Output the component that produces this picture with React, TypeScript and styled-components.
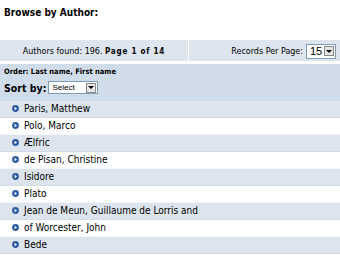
import React from "react";
import styled, { createGlobalStyle } from "styled-components";

const Global = createGlobalStyle`
  html, body { margin: 0; padding: 0; background: #fff; }
  body { font-family: "DejaVu Sans", Verdana, sans-serif; color: #000; }
`;

const Page = styled.div`
  width: 340px;
  display: flex;
  flex-direction: column;
`;

const Title = styled.h1`
  margin: 0;
  padding: 7px 0 0 4px;
  height: 40px;
  box-sizing: border-box;
  font-size: 10px;
  font-weight: bold;
  font-stretch: condensed;
`;

const InfoBar = styled.div`
  display: grid;
  grid-template-columns: 188px 1fr;
  height: 24px;
  box-sizing: border-box;
  background: #dfe5ee;
  border-bottom: 3px solid #fff;
  font-size: 8px;
`;

const InfoCell = styled.div<{ $align: "center" | "right"; $divider?: boolean }>`
  display: flex;
  align-items: center;
  justify-content: ${(p) => (p.$align === "center" ? "center" : "flex-end")};
  gap: 3px;
  padding-top: 1px;
  padding-right: ${(p) => (p.$align === "right" ? "4px" : "0")};
  border-left: ${(p) => (p.$divider ? "1px solid #fff" : "none")};
`;

const Strong = styled.b`
  font-stretch: condensed;
  letter-spacing: 0.8px;
`;

const Select = styled.div<{ $w: number; $h: number; $fs: number }>`
  display: flex;
  align-items: center;
  justify-content: space-between;
  width: ${(p) => p.$w}px;
  height: ${(p) => p.$h}px;
  box-sizing: border-box;
  border: 1px solid #7f9db9;
  background: #fff;
  padding: 0 1px 0 3px;
  font-size: ${(p) => p.$fs}px;
  font-weight: normal;
  font-stretch: normal;
  font-family: "Liberation Sans", Arial, sans-serif;
`;

const Arrow = styled.span`
  width: 10px;
  height: 10px;
  box-sizing: border-box;
  background: #e4e4e4;
  border: 1px solid #8a8a8a;
  display: flex;
  align-items: center;
  justify-content: center;
  &::after {
    content: "";
    border-left: 3px solid transparent;
    border-right: 3px solid transparent;
    border-top: 3px solid #000;
  }
`;

const SortPanel = styled.div`
  background: #d1dcea;
  padding: 3px 3px 0 4px;
  display: flex;
  flex-direction: column;
  gap: 5px;
  height: 37px;
  box-sizing: border-box;
`;

const OrderText = styled.div`
  font-size: 7.5px;
  font-weight: bold;
  font-stretch: condensed;
`;

const SortRow = styled.div`
  display: flex;
  align-items: center;
  gap: 2px;
  font-size: 10.5px;
  font-weight: bold;
  font-stretch: condensed;
`;

const List = styled.ul`
  list-style: none;
  margin: 0;
  padding: 0;
`;

const Row = styled.li<{ $shade: boolean }>`
  display: flex;
  align-items: center;
  gap: 5px;
  height: 17px;
  box-sizing: border-box;
  padding-left: 12px;
  padding-bottom: 1px;
  font-size: 10px;
  font-stretch: condensed;
  background: ${(p) => (p.$shade ? "#dde4ed" : "#fff")};
  border-bottom: 1px solid ${(p) => (p.$shade ? "#d3dbe6" : "#f3f6fa")};
`;

const Bullet = () => (
  <svg width="7" height="7" viewBox="0 0 7 7">
    <circle cx="3.5" cy="3.5" r="3.4" fill="#2d5aa0" />
    <path d="M2.6 1.7 L5 3.5 L2.6 5.3 Z" fill="#fff" />
  </svg>
);

const authors = [
  "Paris, Matthew",
  "Polo, Marco",
  "Ælfric",
  "de Pisan, Christine",
  "Isidore",
  "Plato",
  "Jean de Meun, Guillaume de Lorris and",
  "of Worcester, John",
  "Bede",
];

export default function App() {
  return (
    <Page>
      <Global />
      <Title>Browse by Author:</Title>
      <InfoBar>
        <InfoCell $align="center">
          <span>
            Authors found: 196. <Strong>Page 1 of 14</Strong>
          </span>
        </InfoCell>
        <InfoCell $align="right" $divider>
          <span>Records Per Page:</span>
          <Select $w={30} $h={15} $fs={11}>
            15
            <Arrow />
          </Select>
        </InfoCell>
      </InfoBar>
      <SortPanel>
        <OrderText>Order: Last name, First name</OrderText>
        <SortRow>
          Sort by:
          <Select $w={50} $h={13} $fs={8}>
            Select
            <Arrow />
          </Select>
        </SortRow>
      </SortPanel>
      <List>
        {authors.map((a, i) => (
          <Row key={a} $shade={i % 2 === 0}>
            <Bullet />
            {a}
          </Row>
        ))}
      </List>
    </Page>
  );
}
